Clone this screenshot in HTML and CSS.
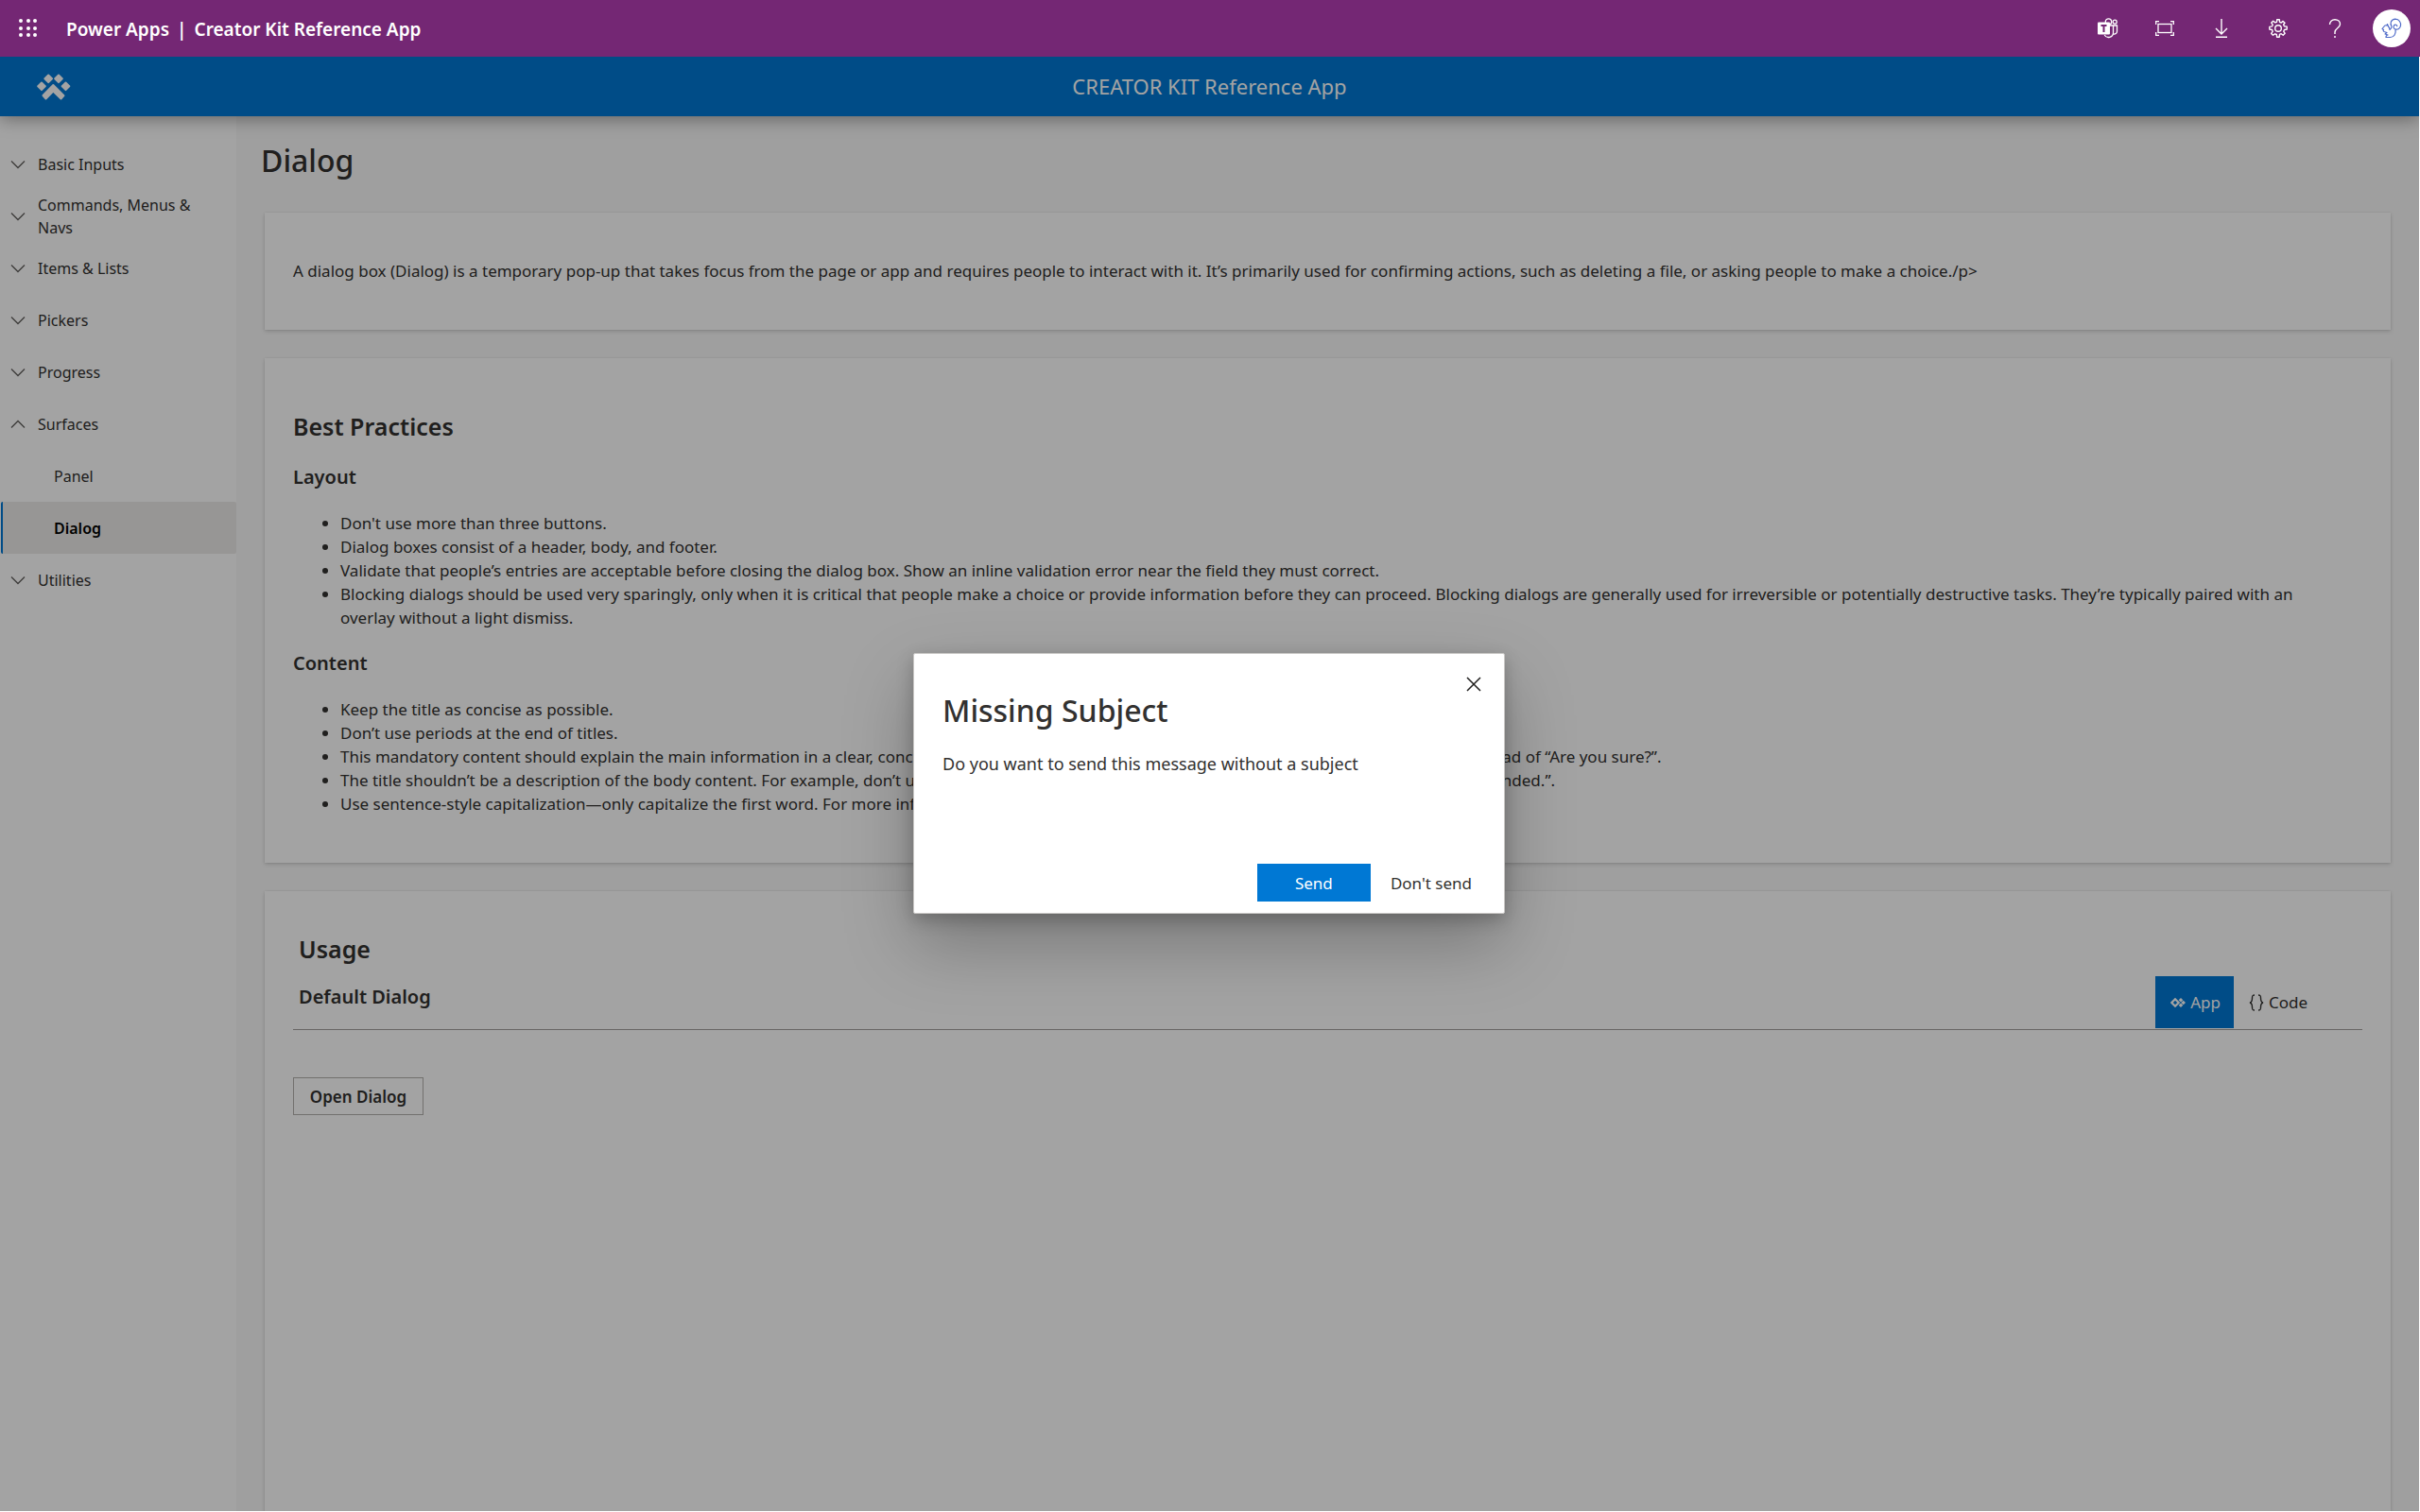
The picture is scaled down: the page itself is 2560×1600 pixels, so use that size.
FILE: index.html
```html
<!DOCTYPE html>
<html lang="en">
<head>
<meta charset="utf-8">
<title>Creator Kit Reference App - Power Apps</title>
<link rel="stylesheet" href="styles.css">
</head>
<body>
<header class="suite">
  <button class="icon-btn waffle" aria-label="App launcher">
    <svg width="20" height="20" viewBox="0 0 20 20" fill="#fff"><circle cx="2" cy="2" r="2"/><circle cx="10" cy="2" r="2"/><circle cx="17" cy="2" r="2"/><circle cx="2" cy="10" r="2"/><circle cx="10" cy="10" r="2"/><circle cx="17" cy="10" r="2"/><circle cx="2" cy="17" r="2"/><circle cx="10" cy="17" r="2"/><circle cx="17" cy="17" r="2"/></svg>
  </button>
  <div class="suite-title"><span>Power Apps</span><span>|</span><span>Creator Kit Reference App</span></div>
  <div class="suite-tools">
    <button class="icon-btn" aria-label="Teams">
      <svg width="22" height="22" viewBox="0 0 22 22" fill="none" stroke="#fff" stroke-width="1.300"><circle cx="11.500" cy="4" r="3.200"/><circle cx="18.200" cy="4.200" r="2"/><path d="M13 8h3.500v7.500a5 5 0 0 1-9.300 2.500M16.500 8h4v6a3 3 0 0 1-4 3"/><rect x="0" y="4.500" width="13" height="13" rx="1" fill="#fff" stroke="none"/><path d="M3.500 8h6M6.500 8v7" stroke="#742774" stroke-width="2"/></svg>
    </button>
    <button class="icon-btn" aria-label="Fit to page">
      <svg width="20" height="20" viewBox="0 0 20 20" fill="none" stroke="#fff" stroke-width="1.300"><rect x="3" y="5.500" width="14" height="9"/><path d="M.7 6V2.700H4M16 2.700h3.300V6M19.300 14v3.300H16M4 17.300H.7V14"/></svg>
    </button>
    <button class="icon-btn" aria-label="Download">
      <svg width="20" height="20" viewBox="0 0 20 20" fill="none" stroke="#fff" stroke-width="1.400"><path d="M10 0v15.500M4 10l6 6 6-6M4 19.300h12"/></svg>
    </button>
    <button class="icon-btn" aria-label="Settings">
      <svg width="20" height="20" viewBox="0 0 20 20" fill="none" stroke="#fff" stroke-width="1.400" stroke-linejoin="round"><circle cx="10" cy="10" r="3.300"/><path d="M8.500 3.300L8.700.8h2.600l.2 2.500 1.700.7 1.900-1.600 1.900 1.900L15.600 6l.8 1.800 2.800.3v2.900l-2.700.5-.8 1.700 1.500 2.100-2 1.900-2-1.500-1.700.7-.3 2.800H8.600l-.3-2.700-1.700-.7-2.100 1.500-1.800-1.900L4.200 13.200l-.7-1.700L.8 11V8.400l2.700-.5.7-1.700L2.800 4.100l1.900-1.800 2.100 1.600z"/></svg>
    </button>
    <button class="icon-btn" aria-label="Help">
      <svg width="20" height="20" viewBox="0 0 20 20" fill="none" stroke="#fff" stroke-width="1.400"><path d="M4.500 6C4.500 2.800 6.800.8 10 .8S15.500 2.800 15.500 5.600c0 4-5.500 4.400-5.500 8.400v2M10 18v2"/></svg>
    </button>
    <button class="avatar" aria-label="Account">
      <svg width="22" height="22" viewBox="0 0 22 22" fill="none" stroke="#4f6bc9" stroke-width="1.200" stroke-linejoin="round" stroke-linecap="round"><path d="M11 9C9 6 10 1.500 15 1.200c4 0 6 3.800 5.500 7-.5 3-3 4.300-5.500 3.800-2-.5-2.500-2.500-1.500-4 1-1.200 3-1 3.300.6M11 9c0 2-1 3-2 3.500M15 12.500c1 4-1.500 8-5.500 8H5c0-1.500.5-2.500 2-2.500M7 18l-3-1 2-1.500-3-1c-1-.5-1-1.500-.5-2L1 11.500l2-2.500c1-1.300 2-1.500 3-1l.5-1.500 1 2.500c1 1 1.500 2.500 1.500 3.500"/></svg>
    </button>
  </div>
</header>

<div class="app">
  <div class="app-bar">
    <svg class="logo" width="36" height="28" viewBox="0 0 36 28" fill="#fff" stroke="#fff" stroke-width="2" stroke-linejoin="round"><path d="M12.200 1.500L16 5.300 12.200 9.100 8.400 5.300zM23 1.500L26.800 5.300 23 9.100 19.200 5.300zM5 9.500L8.800 13.300 5 17.100 1.200 13.300zM30.500 9.500L34.300 13.300 30.500 17.100 26.700 13.300z"/><path d="M17.300 12L28.500 23.200 25.500 26.500 17.300 18.500 9.500 26.500 6.500 23z"/></svg>
    <div class="app-name">CREATOR KIT Reference App</div>
  </div>

  <div class="body">
    <nav class="nav" aria-label="Components">
      <button class="group"><svg class="chev" viewBox="0 0 16 16"><path d="M1 4.500l7 7 7-7"/></svg><span>Basic Inputs</span></button>
      <button class="group"><svg class="chev" viewBox="0 0 16 16"><path d="M1 4.500l7 7 7-7"/></svg><span>Commands, Menus &amp; Navs</span></button>
      <button class="group"><svg class="chev" viewBox="0 0 16 16"><path d="M1 4.500l7 7 7-7"/></svg><span>Items &amp; Lists</span></button>
      <button class="group"><svg class="chev" viewBox="0 0 16 16"><path d="M1 4.500l7 7 7-7"/></svg><span>Pickers</span></button>
      <button class="group"><svg class="chev" viewBox="0 0 16 16"><path d="M1 4.500l7 7 7-7"/></svg><span>Progress</span></button>
      <button class="group" aria-expanded="true"><svg class="chev" viewBox="0 0 16 16"><path d="M1 11.500l7-7 7 7"/></svg><span>Surfaces</span></button>
      <a class="leaf" href="#panel">Panel</a>
      <a class="leaf current" href="#dialog" aria-current="page">Dialog</a>
      <button class="group"><svg class="chev" viewBox="0 0 16 16"><path d="M1 4.500l7 7 7-7"/></svg><span>Utilities</span></button>
    </nav>

    <main class="content">
      <h1>Dialog</h1>
      <section class="card intro">
        <p>A dialog box (Dialog) is a temporary pop-up that takes focus from the page or app and requires people to interact with it. It’s primarily used for confirming actions, such as deleting a file, or asking people to make a choice./p&gt;</p>
      </section>
      <section class="card practices">
        <h2>Best Practices</h2>
        <h3>Layout</h3>
        <ul>
          <li>Don't use more than three buttons.</li>
          <li>Dialog boxes consist of a header, body, and footer.</li>
          <li>Validate that people’s entries are acceptable before closing the dialog box. Show an inline validation error near the field they must correct.</li>
          <li>Blocking dialogs should be used very sparingly, only when it is critical that people make a choice or provide information before they can proceed. Blocking dialogs are generally used for irreversible or potentially destructive tasks. They’re typically paired with an overlay without a light dismiss.</li>
        </ul>
        <h3>Content</h3>
        <ul>
          <li>Keep the title as concise as possible.</li>
          <li>Don’t use periods at the end of titles.</li>
          <li>This mandatory content should explain the main information in a clear, concise, and specific statement or question. For example, “Delete these files?” instead of “Are you sure?”.</li>
          <li>The title shouldn’t be a description of the body content. For example, don’t use “Error!” as a title. Instead, use an informative statement like “Your session ended.”.</li>
          <li>Use sentence-style capitalization—only capitalize the first word. For more info, see Capitalization.</li>
        </ul>
      </section>
      <section class="card usage">
        <h2>Usage</h2>
        <div class="usage-head">
          <h3>Default Dialog</h3>
          <div class="tabs" role="tablist">
            <button class="tab active" role="tab" aria-selected="true"><svg width="16" height="10" viewBox="0 0 16 10"><path d="M5 1.300L8.700 5 5 8.700 1.300 5z" fill="none" stroke="#fff" stroke-width="2.200"/><path d="M11 0l2.300 2.300L11 4.600 8.700 2.300zM13.700 2.700L16 5l-2.300 2.300L11.400 5zM11 5.400l2.300 2.300L11 10 8.700 7.700z" fill="#fff"/></svg>App</button>
            <button class="tab" role="tab" aria-selected="false"><svg width="16" height="18" viewBox="0 0 16 18" fill="none" stroke="#323130" stroke-width="1.400"><path d="M6 1C3.500 1 3.500 2 3.500 4S3.500 8.500 1 9c2.500.5 2.500 3 2.500 5S3.500 17 6 17M10 1c2.500 0 2.500 1 2.500 3S12.500 8.500 15 9c-2.500.5-2.500 3-2.500 5S12.500 17 10 17"/></svg>Code</button>
          </div>
        </div>
        <button class="open-btn">Open Dialog</button>
      </section>
    </main>
  </div>

  <div class="overlay">
    <div class="dialog" role="dialog" aria-modal="true" aria-labelledby="dlg-title">
      <button class="close" aria-label="Close"><svg width="16" height="16" viewBox="0 0 16 16"><path d="M1 1l14 14M15 1L1 15" stroke="#201f1e" stroke-width="1.500"/></svg></button>
      <h2 id="dlg-title">Missing Subject</h2>
      <p>Do you want to send this message without a subject</p>
      <div class="actions">
        <button class="primary">Send</button>
        <button class="plain">Don't send</button>
      </div>
    </div>
  </div>
</div>
</body>
</html>
```
FILE: styles.css
```css
* { box-sizing: border-box; }
body {
  margin: 0;
  height: 100vh;
  display: flex;
  flex-direction: column;
  overflow: hidden;
  background: #fff;
  color: #323130;
  font-family: "Noto Sans", sans-serif;
  font-size: 17px;
  line-height: 25px;
}
button { font: inherit; color: inherit; background: none; border: 0; padding: 0; margin: 0; }
h1, h2, h3, p, ul { margin: 0; }
h1, h2, h3 { font-weight: 600; }
svg { display: block; flex: none; }

.suite {
  flex: none;
  height: 60px;
  display: flex;
  align-items: center;
  background: #742774;
  color: #fff;
  padding-right: 10px;
}
.icon-btn { width: 60px; height: 60px; display: grid; place-items: center; }
.suite-title { display: flex; gap: 8px; margin-left: 10px; padding-top: 2px; font-size: 19px; font-weight: 600; }
.suite-tools { display: flex; align-items: center; margin-left: auto; }
.avatar { width: 40px; height: 40px; margin-left: 10px; border-radius: 50%; background: #fff; display: grid; place-items: center; }

.app {
  position: relative;
  flex: 1;
  min-height: 0;
  display: flex;
  flex-direction: column;
  margin: 0 1px 1px 0;
  overflow: hidden;
}
.app-bar {
  position: relative;
  z-index: 1;
  flex: none;
  height: 63px;
  display: grid;
  grid-template-columns: 200px 1fr 200px;
  align-items: center;
  background: #0078d4;
  color: #fff;
  box-shadow: 0 2px 18px rgba(0, 0, 0, .4);
}
.logo { margin-left: 39px; }
.app-name { text-align: center; font-size: 22px; line-height: 30px; padding-bottom: 1px; }

.body { flex: 1; min-height: 0; display: flex; }
.nav { flex: none; width: 250px; padding-top: 23px; display: flex; flex-direction: column; font-size: 16px; line-height: 24px; }
.group { height: 55px; display: flex; align-items: center; gap: 13px; padding: 0 30px 0 11px; text-align: left; }
.chev { width: 16px; height: 16px; fill: none; stroke: #605e5c; stroke-width: 1.3; }
.leaf { height: 55px; display: flex; align-items: center; margin-left: 1px; padding-left: 54px; border-left: 2px solid transparent; color: inherit; text-decoration: none; }
.current { background: #edebe9; border-left-color: #0078d4; border-radius: 2px; font-weight: 600; color: #000; }

.content { flex: 1; min-width: 0; display: flex; flex-direction: column; gap: 30px; padding: 22px 30px 0; background: #f9f9f9; }
h1 { font-size: 32px; line-height: 50px; font-weight: 500; margin-left: -4px; }
.card { background: #fff; padding: 30px; box-shadow: 0 2px 4px rgba(0, 0, 0, .14), 0 0 2px rgba(0, 0, 0, .1); }
.intro { height: 124px; display: flex; align-items: center; padding-bottom: 32px; }
.practices { height: 534px; padding-top: 54px; }
.practices h2, .usage h2 { font-size: 25px; line-height: 36px; }
h3 { font-size: 20px; line-height: 28px; }
.practices h3 { margin-top: 22px; }
.practices ul { margin-top: 22px; padding: 0 20px 0 50px; }
.usage { flex: 1; padding-top: 43px; }
.usage > h2, .usage h3 { margin-left: 6px; }
.usage-head { display: flex; justify-content: space-between; height: 68px; border-bottom: 1px solid #a19f9d; }
.usage h3 { padding-top: 19px; }
.tabs { display: flex; padding-right: 44px; margin-top: 11px; }
.tab { height: 55px; display: flex; align-items: center; gap: 5px; padding: 0 14px 0 16px; }
.active { background: #0078d4; color: #fff; }
.open-btn { margin-top: 50px; width: 138px; height: 40px; border: 1px solid #b3b0ad; font-weight: 600; }

.overlay { position: absolute; inset: 0; z-index: 2; display: flex; align-items: center; justify-content: center; padding: 0 1px 1px 0; background: rgba(0, 0, 0, .36); }
.dialog {
  width: 626px;
  min-height: 276px;
  display: flex;
  flex-direction: column;
  padding: 12px 30px;
  background: #fff;
  border: 1px solid #c8c6c4;
  border-radius: 2px;
  box-shadow: 0 32px 72px rgba(0, 0, 0, .26), 0 6px 18px rgba(0, 0, 0, .22);
}
.close { align-self: flex-end; width: 40px; height: 40px; margin-right: -18px; display: grid; place-items: center; }
.dialog h2 { font-size: 32px; line-height: 40px; font-weight: 500; margin-top: -12px; }
.dialog p { margin-top: 24px; font-size: 18px; }
.actions { display: flex; justify-content: flex-end; gap: 21px; margin-top: auto; }
.primary { width: 120px; height: 40px; background: #0078d4; color: #fff; }
.plain { height: 40px; padding-right: 4px; }
```
